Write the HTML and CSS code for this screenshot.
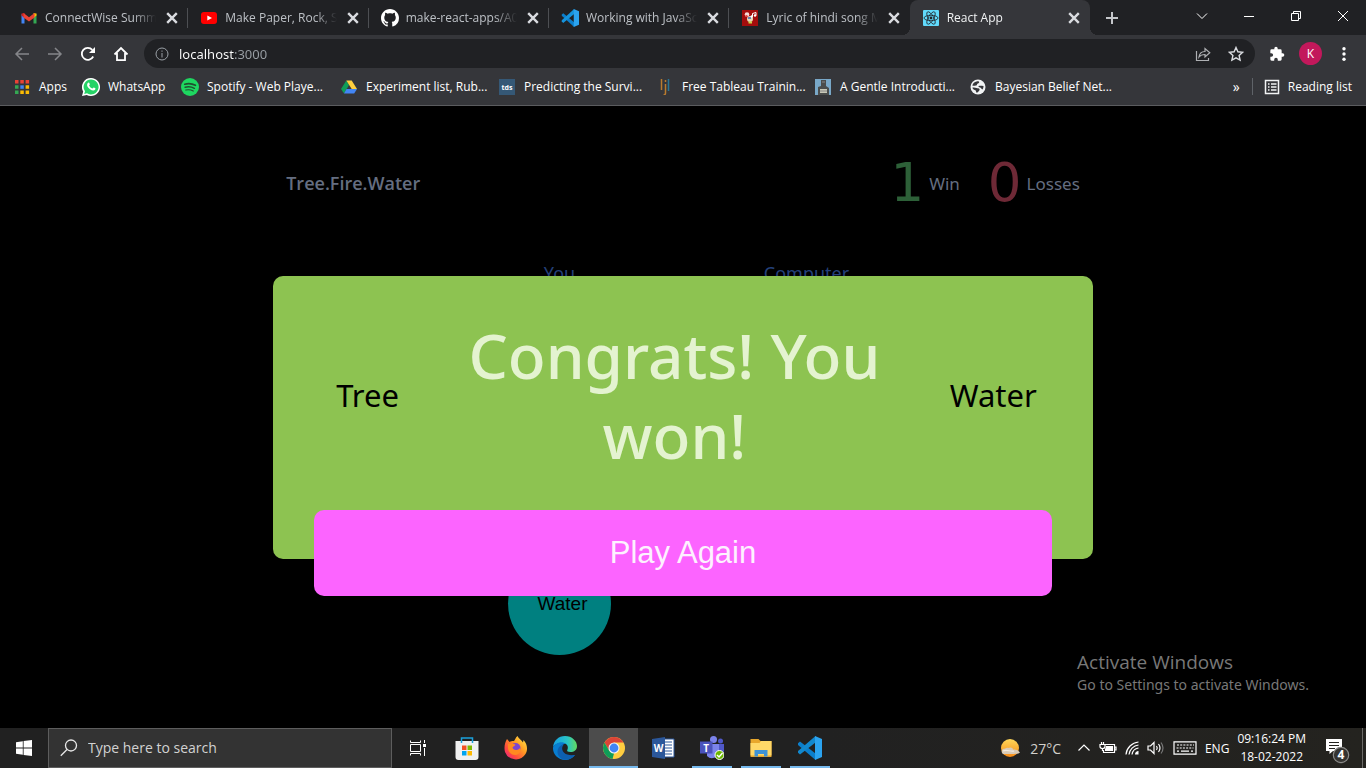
FILE: index.html
```html
<!DOCTYPE html>
<html lang="en">
<head>
<meta charset="utf-8">
<meta name="viewport" content="width=device-width, initial-scale=1">
<title>React App</title>
<link rel="stylesheet" href="styles.css">
</head>
<body>
<header class="browser">
  <div class="strip">
    <nav class="tabs" aria-label="Tabs">
      <div class="tab">
        <svg class="ico" viewBox="0 0 16 16"><path d="M.5 4v9.500h3V7z" fill="#4285f4"/><path d="M12.500 7v6.500h3V4z" fill="#34a853"/><path d="M.5 3.500 3.500 3v5L.5 5.500z" fill="#c5221f"/><path d="M15.500 3.500 12.500 3v5l3-2.500z" fill="#fbbc04"/><path d="M2.500 3 8 7.200 13.500 3v4.500L8 11.500 2.500 7.500z" fill="#ea4335"/></svg>
        <a class="tab-title" href="#">ConnectWise Summe</a>
        <button class="close" aria-label="Close tab"><svg viewBox="0 0 10 10"><path d="M1 1l8 8M9 1L1 9"/></svg></button>
      </div>
      <div class="tab">
        <svg class="ico" viewBox="0 0 16 16"><rect y="2" width="16" height="12" rx="3" fill="#f00"/><path d="M6.300 5.500v5L11 8z" fill="#fff"/></svg>
        <a class="tab-title" href="#">Make Paper, Rock, Sc</a>
        <button class="close" aria-label="Close tab"><svg viewBox="0 0 10 10"><path d="M1 1l8 8M9 1L1 9"/></svg></button>
      </div>
      <div class="tab">
        <svg class="ico big" viewBox="0 0 16 16"><path fill="#fff" d="M8 0C3.580 0 0 3.580 0 8c0 3.540 2.290 6.530 5.470 7.590.4.070.55-.17.55-.38 0-.19-.01-.82-.01-1.490-2.010.37-2.530-.49-2.690-.94-.09-.23-.48-.94-.82-1.130-.28-.15-.68-.52-.01-.53.63-.01 1.080.58 1.230.82.72 1.210 1.870.87 2.330.66.07-.52.28-.87.51-1.070-1.780-.2-3.640-.89-3.640-3.950 0-.87.31-1.590.82-2.150-.08-.2-.36-1.020.08-2.120 0 0 .67-.21 2.200.82.640-.18 1.320-.27 2-.27s1.360.09 2 .27c1.530-1.040 2.200-.82 2.200-.82.440 1.100.160 1.920.080 2.120.51.56.82 1.270.82 2.150 0 3.070-1.870 3.750-3.650 3.950.29.25.54.73.54 1.480 0 1.070-.01 1.930-.01 2.200 0 .21.15.46.55.38A8 8 0 0 0 16 8c0-4.420-3.580-8-8-8z"/></svg>
        <a class="tab-title" href="#">make-react-apps/A04</a>
        <button class="close" aria-label="Close tab"><svg viewBox="0 0 10 10"><path d="M1 1l8 8M9 1L1 9"/></svg></button>
      </div>
      <div class="tab">
        <svg class="ico big" viewBox="0 0 24 24"><path d="M1 7.200 3 5.500l14.500 12V24L1 9z" fill="#0b7ecb"/><path d="M1 16.800 3 18.500 17.500 6.500V0L1 15z" fill="#1593dc"/><path d="M17 0l7 3v18l-7 3z" fill="#2ba3ef"/></svg>
        <a class="tab-title" href="#">Working with JavaScr</a>
        <button class="close" aria-label="Close tab"><svg viewBox="0 0 10 10"><path d="M1 1l8 8M9 1L1 9"/></svg></button>
      </div>
      <div class="tab">
        <svg class="ico" viewBox="0 0 16 16"><path d="M0 0h16v16H0z" fill="#a30d0d"/><circle cx="5" cy="4.500" r="2.300" fill="#f6dcd8"/><path d="M3.500 5.500l3 1.500" stroke="#e04040" stroke-width="1.500"/><circle cx="8" cy="9" r="3" fill="#e8d9b8"/><path d="M6 8h3" stroke="#3a62b5" stroke-width="1.500"/><path d="M6.500 11.500h3.500v2H6.500z" fill="#c8d84a"/><path d="M10.500 6.500V3.500l3.500-1v3" stroke="#fff" fill="none"/><circle cx="9.800" cy="6.500" r="1.200" fill="#fff"/><circle cx="13" cy="5.500" r="1.200" fill="#fff"/></svg>
        <a class="tab-title" href="#">Lyric of hindi song M</a>
        <button class="close" aria-label="Close tab"><svg viewBox="0 0 10 10"><path d="M1 1l8 8M9 1L1 9"/></svg></button>
      </div>
      <div class="tab active">
        <svg class="ico" viewBox="0 0 16 16"><rect width="16" height="16" rx="1" fill="#61dafb"/><g fill="none" stroke="#20232a" stroke-width=".8"><ellipse cx="8" cy="8" rx="7" ry="2.700"/><ellipse cx="8" cy="8" rx="7" ry="2.700" transform="rotate(60 8 8)"/><ellipse cx="8" cy="8" rx="7" ry="2.700" transform="rotate(120 8 8)"/></g><circle cx="8" cy="8" r="1.400" fill="#20232a"/></svg>
        <a class="tab-title" href="#">React App</a>
        <button class="close" aria-label="Close tab"><svg viewBox="0 0 10 10"><path d="M1 1l8 8M9 1L1 9"/></svg></button>
      </div>
    </nav>
    <button class="new-tab" aria-label="New tab"><svg viewBox="0 0 12 12"><path d="M6 0v12M0 6h12"/></svg></button>
    <div class="window-controls">
      <button aria-label="Search tabs"><svg viewBox="0 0 12 12"><path d="M1 3.500l5 5 5-5"/></svg></button>
      <button aria-label="Minimize"><svg viewBox="0 0 12 12"><path d="M1 6.500h10"/></svg></button>
      <button aria-label="Restore"><svg viewBox="0 0 12 12"><path d="M1.500 3.500h7v7h-7zM3.500 3.500v-2h7v7h-2"/></svg></button>
      <button aria-label="Close window"><svg viewBox="0 0 12 12"><path d="M1 1l10 10M11 1L1 11"/></svg></button>
    </div>
  </div>

  <div class="toolbar">
    <div class="nav-buttons">
      <button class="dim" aria-label="Back"><svg viewBox="0 0 16 16"><path d="M15 8H2M8 2L2 8l6 6"/></svg></button>
      <button class="dim" aria-label="Forward"><svg viewBox="0 0 16 16"><path d="M1 8h13M8 2l6 6-6 6"/></svg></button>
      <button aria-label="Reload"><svg viewBox="0 0 16 16"><path d="M13.200 10.500A6 6 0 1 1 12.300 3.800" stroke-width="1.800"/><path d="M15 1v6H9z" fill="currentColor" stroke="none"/></svg></button>
      <button aria-label="Home"><svg viewBox="0 0 16 16"><path d="M1.500 8.500 8 2l6.500 6.500M4 7v7.200h8V7" stroke-width="1.800"/></svg></button>
    </div>
    <div class="omnibox">
      <svg class="info" viewBox="0 0 14 14"><circle cx="7" cy="7" r="6"/><path d="M7 6v4.500M7 3.500v1.300"/></svg>
      <input class="url" type="text" value="localhost:3000" aria-label="Address">
      <button aria-label="Share"><svg viewBox="0 0 16 16"><path d="M1.500 5v9.500h12V12M4 11c.5-4 3-5.500 6-5.500V2.500l4.800 4.300L10 11V8.500c-3 0-4.500.5-6 2.500z" stroke-width="1.200"/></svg></button>
      <button class="star" aria-label="Bookmark this page"><svg viewBox="0 0 16 16"><path d="M8 1.500l1.900 4.300 4.700.5-3.500 3.200 1 4.700L8 11.800l-4.100 2.400 1-4.700L1.400 6.300l4.700-.5z" stroke-width="1.400"/></svg></button>
    </div>
    <div class="actions">
      <button aria-label="Extensions"><svg viewBox="0 0 24 24"><path fill="currentColor" stroke="none" d="M20.500 11H19V7a2 2 0 0 0-2-2h-4V3.500a2.500 2.500 0 0 0-5 0V5H4a2 2 0 0 0-2 2v3.800h1.500a2.700 2.700 0 0 1 0 5.400H2V20a2 2 0 0 0 2 2h3.800v-1.500a2.700 2.700 0 0 1 5.400 0V22H17a2 2 0 0 0 2-2v-4h1.500a2.500 2.500 0 0 0 0-5z"/></svg></button>
      <button class="avatar" aria-label="Profile">K</button>
      <button aria-label="Menu"><svg viewBox="0 0 16 16"><g fill="currentColor" stroke="none"><circle cx="8" cy="2.800" r="1.700"/><circle cx="8" cy="8" r="1.700"/><circle cx="8" cy="13.200" r="1.700"/></g></svg></button>
    </div>
  </div>

  <nav class="bookmarks" aria-label="Bookmarks">
    <a class="bookmark" href="#"><svg class="ico" viewBox="0 0 16 16"><path fill="#ea4335" d="M1 1h3.500v3.500H1zM6.300 1h3.500v3.500H6.300zM11.600 1h3.500v3.500h-3.500z"/><path fill="#34a853" d="M1 6.300h3.500v3.500H1zM1 11.600h3.500v3.500H1z"/><path fill="#4285f4" d="M6.300 6.300h3.500v3.500H6.300z"/><path fill="#fbbc04" d="M11.600 6.300h3.500v3.500h-3.500zM6.300 11.600h3.500v3.500H6.300zM11.600 11.600h3.500v3.500h-3.500z"/></svg>Apps</a>
    <a class="bookmark" href="#"><svg class="ico big" viewBox="0 0 18 18"><path d="M9 0a9 9 0 1 1-4.300 16.900L0 18l1.200-4.500A9 9 0 0 1 9 0z" fill="#fff"/><path d="M9 1.500a7.500 7.500 0 1 1-4 13.800l-2.800.7.800-2.700A7.500 7.500 0 0 1 9 1.500z" fill="#25d366"/><path d="M5.800 5c.8-.9 1.400-.6 1.900.9.300.9-.4 1-.6 1.600.8 1.600 1.800 2.500 3.300 3.100.6-.3.900-1.300 1.500-1 1.800.8 1.900 1 1.300 1.900-1 1.500-3.300 1-5.200-.3C5.500 9.500 4.300 7 5.800 5z" fill="#fff"/></svg>WhatsApp</a>
    <a class="bookmark" href="#"><svg class="ico big" viewBox="0 0 16 16"><circle cx="8" cy="8" r="8" fill="#1ed760"/><g fill="none" stroke="#20502f" stroke-linecap="round"><path d="M3.300 5.500c3-.9 6.600-.6 9.500 1" stroke-width="1.500"/><path d="M3.700 8.200c2.700-.7 5.700-.4 8.200 1" stroke-width="1.300"/><path d="M4.200 10.700c2.300-.5 4.700-.3 6.700.9"/></g></svg>Spotify - Web Playe...</a>
    <a class="bookmark" href="#"><svg class="ico" viewBox="0 0 16 16"><path d="M5.300 1.500 8 6 3 14.500 0 10z" fill="#0f9d58"/><path d="M5.300 1.500h5.400L16 10h-5.300z" fill="#ffcf3e"/><path d="M5.500 10H16l-2.800 4.500H3z" fill="#4285f4"/></svg>Experiment list, Rub...</a>
    <a class="bookmark" href="#"><svg class="ico" viewBox="0 0 16 16"><path fill="#355876" d="M0 0h16v16H0z"/><text class="tds" x="8" y="11" text-anchor="middle">tds</text></svg>Predicting the Survi...</a>
    <a class="bookmark" href="#"><svg class="ico" viewBox="0 0 16 16"><path d="M4.500 0v11M8.500 5v9q0 2-2 2" stroke="#b97b2f" stroke-width="1.500" fill="none"/><path d="M11.500 0v12" stroke="#287695" stroke-width="1.500"/><path d="M8.500 1v2" stroke="#b97b2f" stroke-width="1.500"/></svg>Free Tableau Trainin...</a>
    <a class="bookmark" href="#"><svg class="ico" viewBox="0 0 16 16"><path fill="#79a8c8" d="M0 0h16v16H0z"/><path fill="#4b4d4c" d="M6 1h5v6H6zM3 8l3-1h5l3 2v7H3z"/><path fill="#c9c9b8" d="M5 10h7v4H5z"/><path d="M5 12h7M7 3h3" stroke="#888"/></svg>A Gentle Introducti...</a>
    <a class="bookmark" href="#"><svg class="ico" viewBox="0 0 16 16"><circle cx="8" cy="8" r="7.500" fill="#f1f3f4"/><path d="M2.300 6.500C3 4 5 2.500 7.500 2.300c1.500 0 2 .7 1.500 1.500S7 4.500 7 5.500s-1 1-2 1.200-1.700.3-2.700-.2z" fill="#35363a"/><path d="M2.500 8.500c1.500-.3 3 0 4 .5s2.500 0 3 1-.5 2-1.500 3-2 .8-2-.5-1-1.500-2-1.800-1.500-1.200-1.500-2.200zM8.500 7c1.500-.5 3-.3 5 0 0 1.500-.3 2.500-1 3.500-1-.5-1.500-1.800-2.500-2S8.500 8 8.500 7z" fill="#35363a"/></svg>Bayesian Belief Net...</a>
    <button class="more" aria-label="More bookmarks">»</button>
    <button class="reading"><svg class="ico" viewBox="0 0 16 16"><path d="M1.500 1.500h13v13h-13z" stroke="#f1f3f4" stroke-width="1.500" fill="none"/><path d="M4 5h1.500M7 5h5.500M4 8h1.500M7 8h5.500M4 11h1.500M7 11h5.500" stroke="#f1f3f4" stroke-width="1.500"/></svg>Reading list</button>
  </nav>
</header>

<main class="stage">
  <div class="game">
    <div class="scorebar">
      <h1 class="brand">Tree.Fire.Water</h1>
      <div class="scores">
        <div class="score win"><span class="digit">1</span>Win</div>
        <div class="score loss"><span class="digit">0</span>Losses</div>
      </div>
    </div>
    <div class="board">
      <section class="player"><h2>You</h2><button class="choice">Water</button></section>
      <section class="player"><h2>Computer</h2></section>
    </div>
  </div>

  <section class="result" role="dialog" aria-label="Round result">
    <div class="result-row">
      <span class="pick">Tree</span>
      <p class="message">Congrats! You won!</p>
      <span class="pick">Water</span>
    </div>
    <button class="play">Play Again</button>
  </section>

  <aside class="watermark"><strong>Activate Windows</strong><span>Go to Settings to activate Windows.</span></aside>
</main>

<footer class="taskbar">
  <button class="start" aria-label="Start"><svg viewBox="0 0 16 16"><path fill="#fff" d="M0 2.200 6.800 1.200v6.400H0zM7.600 1.100 16 0v7.600H7.600zM0 8.400h6.800v6.400L0 13.800zM7.600 8.400H16V16l-8.400-1.100z"/></svg></button>
  <label class="search"><svg viewBox="0 0 18 18"><circle cx="11" cy="6.500" r="5.500"/><path d="M7 10.500.8 16.800"/></svg><input type="search" placeholder="Type here to search" aria-label="Type here to search"></label>
  <div class="apps">
    <button class="app" aria-label="Task view"><svg class="small" viewBox="0 0 16 16"><path d="M.5 4.500h10v7H.5zM.5 .5v2h10v-2M.5 15.500v-2h10v2M14.500 0v3M14.500 8v8" fill="none" stroke="#fff"/><path d="M13 4h3v3h-3z" fill="#fff"/></svg></button>
    <button class="app" aria-label="Microsoft Store"><svg viewBox="0 0 24 24"><path d="M.5 5h23v16a3 3 0 0 1-3 3h-17a3 3 0 0 1-3-3z" fill="#f0f0f0"/><path d="M6.500 7V2h11v5" fill="none" stroke="#1ba1dc" stroke-width="1.500"/><path d="M7 9.500h4.500V14H7z" fill="#f25022"/><path d="M12.500 9.500H17V14h-4.500z" fill="#7fba00"/><path d="M7 15h4.500v4.500H7z" fill="#00a4ef"/><path d="M12.500 15H17v4.500h-4.500z" fill="#ffb900"/></svg></button>
    <button class="app" aria-label="Firefox"><svg viewBox="0 0 24 24"><defs><linearGradient id="fx" x1="1" y1="0" x2="0" y2="1"><stop offset="0" stop-color="#fff44f"/><stop offset=".4" stop-color="#ff9a22"/><stop offset=".7" stop-color="#ff4d3d"/><stop offset="1" stop-color="#e5178f"/></linearGradient></defs><path d="M3 3l2.500 3C7 4.800 9 5 10 5c1-1 1.500-3.500 3.500-5 1 3 4 3.500 5.500 6.500l.5-2.500c4 4 4.500 10 2 14A11.500 11.500 0 0 1 1 16C-.2 11.500.8 6.500 3 3z" fill="url(#fx)"/><circle cx="11.500" cy="12" r="5" fill="#7d45d1"/><path d="M4 8c3-.5 6-.5 7.500.8C11 10 9 10.500 8.500 11.500c.5 3 5 3.500 7.500.5 1.500 3-1 7-4.500 7C7 19 4 15.500 4 12z" fill="#ff8a20"/></svg></button>
    <button class="app" aria-label="Microsoft Edge"><svg viewBox="0 0 24 24"><defs><linearGradient id="eg"><stop offset="0" stop-color="#169fe2"/><stop offset=".6" stop-color="#29c4c6"/><stop offset="1" stop-color="#62db5e"/></linearGradient></defs><path d="M0 11.500C.5 4.500 5.500 0 12 0c7 0 12 5 12 10 0 4-3 6-6.500 6-2.500 0-4-.8-3.200-2C16.500 9 12 6.500 8.500 7 4.500 7.200 1 9 0 11.500z" fill="url(#eg)"/><path d="M0 11.500C2 7 9 4.500 13 8c-4-.5-6 3-5.500 6.500.7 4.500 6 7.500 14.500 4.500-3.500 5-9.500 6-14 4.200C3 21.500-.3 17 0 11.500z" fill="#087dd0"/><path d="M11 8.500C7.500 11 8 20.500 22 19c-2.500 3.500-7 5.300-11 4.700C5.500 22 3.500 17 5 13c1-2.500 3-4 6-4.500z" fill="#0d5fb0"/></svg></button>
    <button class="app current" aria-label="Google Chrome"><svg viewBox="0 0 24 24"><circle cx="12" cy="12" r="11" fill="#ffcd40"/><path d="M2.500 6.500A11 11 0 0 1 21.500 6.500H12L7.200 14.700z" fill="#db4437"/><path d="M2.500 6.500 7.200 14.700 12 17.500l-1.500 5.400A11 11 0 0 1 2.500 6.500z" fill="#0f9d58"/><circle cx="12" cy="12" r="5.500" fill="#f1f1f1"/><circle cx="12" cy="12" r="4.400" fill="#4285f4"/></svg></button>
    <button class="app" aria-label="Word"><svg viewBox="0 0 24 24"><path d="M12 3h11v18H12z" fill="#fff" stroke="#2b579a"/><path d="M14 6h7M14 9h7M14 12h7M14 15h7M14 18h7" stroke="#2b579a"/><path d="M1 3 14 1v22L1 21z" fill="#2b579a"/><text class="word" x="7.500" y="16" text-anchor="middle">W</text></svg></button>
    <button class="app open" aria-label="Teams"><svg viewBox="0 0 24 24"><circle cx="20.500" cy="5" r="2.500" fill="#5059c9"/><path d="M15 8h9v7a5 5 0 0 1-9 2z" fill="#5059c9"/><circle cx="13.500" cy="3.500" r="3.500" fill="#7b83eb"/><path d="M7 8h12v8a7 7 0 0 1-12 4z" fill="#7b83eb"/><path d="M0 5.500h12.500v12H0z" fill="#4b53bc"/><text class="word" x="6.200" y="15.500" text-anchor="middle">T</text><circle cx="19.500" cy="19" r="4.500" fill="#6bb700" stroke="#fff"/><path d="M17 19l2 2 3.500-4" fill="none" stroke="#fff" stroke-width="1.500"/></svg></button>
    <button class="app open" aria-label="File Explorer"><svg viewBox="0 0 24 24"><path d="M1.500 3h8l2 2h11v16h-21z" fill="#e8a72c"/><path d="M1.500 7h9l1.500-2h10.500v14.500h-21z" fill="#ffd868"/><path d="M5.500 20.500V14h13v6.500H15V18H9v2.500z" fill="#3f93d5"/></svg></button>
    <button class="app open" aria-label="Visual Studio Code"><svg viewBox="0 0 24 24"><path d="M0 7.200 2 5.500l15.500 12V24L0 9z" fill="#0b7ecb"/><path d="M0 16.800 2 18.500 17.500 6.500V0L0 15z" fill="#1288ce"/><path d="M17 0l7 3v18l-7 3z" fill="#2ba3ef"/></svg></button>
  </div>
  <div class="tray">
    <button class="weather"><svg viewBox="0 0 20 20"><defs><linearGradient id="sun" x2="0" y2="1"><stop stop-color="#ffd75a"/><stop offset="1" stop-color="#f58a16"/></linearGradient></defs><circle cx="10" cy="10" r="9" fill="url(#sun)"/><path d="M3 16a3 3 0 0 1 0-5c2 0 3-2 6-1 2-1 4 0 4 1.500 3 0 5 .5 7 3-2 2-6 1.500-17 1.500z" fill="#d9cbb7"/><path d="M3 13c4-2 7 1 11 0" stroke="#f4ece1" fill="none"/></svg>27°C</button>
    <button aria-label="Show hidden icons"><svg viewBox="0 0 14 14"><path d="M1.500 9.500 7 4l5.500 5.500"/></svg></button>
    <button aria-label="Battery"><svg viewBox="0 0 18 14"><path d="M6 3.500h9.500v8H4.500V9M15.500 6H17v3h-1.500M1 3.500h5v2q0 2-2.500 2T1 5.500zM2.500 1v2.500M4.500 1v2.500M3.500 7.500V10"/><path d="M7 5h7v5H6V8l1-2z" fill="#fff" stroke="none"/></svg></button>
    <button aria-label="Network"><svg viewBox="0 0 14 14"><path d="M1 13.500C1.500 7 7 1.500 13.500 1M4 13.500C4.500 8.500 8.500 4.500 13.500 4M7 13.500c.5-3.500 3-6 6.500-6.500"/><path d="M10 13.500c0-2 1.500-3.500 3.500-3.500v3.500z" fill="#fff" stroke="none"/></svg></button>
    <button aria-label="Volume"><svg viewBox="0 0 18 14"><path d="M1 5h2.500L7 1.500v11L3.500 9H1zM9.500 5q1.500 2 0 4M11.500 3q3 4 0 8"/><path d="M14 1.500q4 5.500 0 11" stroke="#777"/></svg></button>
    <button aria-label="Touch keyboard"><svg viewBox="0 0 24 14"><path d="M1 .8h22v12.400H1z"/><path d="M4 4h17M3.500 7h17" stroke-dasharray="2 1.200"/><path d="M4 10.200h2M8 10.200h8M18 10.200h2"/></svg></button>
    <button class="language">ENG</button>
    <button class="clock"><time>09:16:24 PM</time><time>18-02-2022</time></button>
    <button class="notes" aria-label="Notifications"><svg viewBox="0 0 26 26"><path d="M2 1h16v12H9l-3.500 3v-3H2z" fill="#fff"/><path d="M5 4.500h10M5 7.500h10M5 10.500h6" stroke="#24231f" stroke-width="1.200"/><circle cx="17" cy="17" r="7.700" fill="#353431" stroke="#8b8b89"/><text class="count" x="17" y="21" text-anchor="middle">4</text></svg></button>
  </div>
</footer>
</body>
</html>
```
FILE: styles.css
```css
* { box-sizing: border-box; }

body {
  margin: 0;
  min-height: 100vh;
  display: flex;
  flex-direction: column;
  background: #000;
  font-family: "Open Sans", "Noto Sans", sans-serif;
  font-size: 12px;
  color: #fff;
  overflow: hidden;
}

button {
  margin: 0;
  padding: 0;
  border: 0;
  background: none;
  color: inherit;
  font: inherit;
}

a { color: inherit; text-decoration: none; }
svg { display: block; flex: none; }

.ico { width: 16px; height: 16px; }
.ico.big { width: 18px; height: 18px; margin: 0 -1px; }

/* Browser window */
.browser { background: #35363a; border-bottom: 1px solid #5b5c5f; }

.strip {
  display: flex;
  height: 35px;
  background: #202124;
}

.tabs { display: flex; flex: 0 1 1090px; min-width: 0; padding-left: 8px; }

.tab {
  position: relative;
  flex: 1 1 0;
  min-width: 0;
  display: flex;
  align-items: center;
  gap: 8px;
  padding: 0 8px 0 13px;
  color: #bdc1c6;
}

.tab:not(.active):not(:nth-child(5))::after {
  content: "";
  position: absolute;
  right: 0;
  top: 8px;
  width: 1px;
  height: 20px;
  background: #4d4f53;
}

.tab-title {
  flex: 1;
  min-width: 0;
  white-space: nowrap;
  mask-image: linear-gradient(90deg, #000 80%, transparent);
}

.close svg { width: 12px; height: 12px; stroke: #dadce0; stroke-width: 2; }
.close { padding: 2px; }

.tab.active { background: #35363a; color: #f1f3f4; border-radius: 8px 8px 0 0; }

.tab.active::before,
.tab.active::after {
  content: "";
  position: absolute;
  bottom: 0;
  width: 8px;
  height: 8px;
}
.tab.active::before { right: 100%; background: radial-gradient(circle at 0 0, transparent 8px, #35363a 8px); }
.tab.active::after { left: 100%; background: radial-gradient(circle at 100% 0, transparent 8px, #35363a 8px); }

.new-tab { padding: 0 16px; }
.new-tab svg { width: 12px; height: 12px; stroke: #c4c7ca; stroke-width: 2; }

.window-controls { display: flex; margin-left: auto; padding-bottom: 4px; }
.window-controls button { width: 47px; display: grid; place-items: center; }
.window-controls svg { width: 12px; height: 12px; fill: none; stroke: #fff; }

.toolbar { display: flex; align-items: center; padding: 4px 14px 0; }
.toolbar svg { width: 16px; height: 16px; fill: none; stroke: currentColor; stroke-width: 1.5; }
.nav-buttons { display: flex; gap: 17px; margin-right: 15px; }
.dim { color: #85868a; }

.omnibox {
  flex: 1;
  display: flex;
  align-items: center;
  gap: 17px;
  height: 29px;
  padding: 0 11px;
  border-radius: 15px;
  background: #202124;
  color: #aeb0b3;
}
.omnibox .info { width: 14px; height: 14px; margin-right: -7px; color: #9aa0a6; stroke-width: 1; }
.omnibox .star { color: #dadce0; }

.url {
  flex: 1;
  min-width: 0;
  padding: 0;
  border: 0;
  outline: 0;
  background: linear-gradient(90deg, #fff 55px, #9aa0a6 55px);
  background-clip: text;
  color: transparent;
  font: 13px/20px "Noto Sans", sans-serif;
}

.actions { display: flex; align-items: center; gap: 14px; margin-left: 14px; }
.avatar { width: 23px; height: 23px; border-radius: 50%; background: #c2185b; }

.bookmarks {
  display: grid;
  grid-template-columns: 69px 99px 159px 158px 158px 158px 155px 1fr auto auto;
  align-items: center;
  height: 37px;
  padding: 0 14px;
}
.bookmark { display: flex; align-items: center; gap: 9px; white-space: nowrap; }
.tds { font: bold 7px "Open Sans", sans-serif; fill: #fff; }
.more { padding: 0 12px; font-size: 14px; line-height: 18px; }
.reading {
  display: flex;
  align-items: center;
  gap: 8px;
  padding-left: 11px;
  border-left: 1px solid #5f6368;
}

/* Page */
.stage {
  position: relative;
  flex: 1;
  background: #000;
  font-family: "Noto Sans", sans-serif;
}

.game { width: 60%; margin: 0 auto; padding: 46px 13px 0; }
.scorebar { display: flex; align-items: center; justify-content: space-between; height: 62px; }
.brand { margin: 0; font: 600 18px "Open Sans", sans-serif; color: #656e81; }
.scores { display: flex; gap: 28px; }
.score { display: flex; align-items: center; gap: 5px; font-size: 17px; color: #656e81; }
.digit { font-family: "DejaVu Sans", sans-serif; font-size: 53px; line-height: 62px; }
.win .digit { color: #2d6038; }
.loss .digit { color: #6e2936; }

.board { display: grid; grid-template-columns: 247px 247px; justify-content: center; margin-top: 46px; }
.player { display: flex; flex-direction: column; align-items: center; }
.player h2 { margin: 0; font-size: 18px; line-height: 26px; font-weight: 400; color: #24407b; }
.choice {
  width: 103px;
  height: 103px;
  margin-top: 266px;
  padding-left: 6px;
  border-radius: 50%;
  background: #008080;
  color: #000;
  font: 19px "Liberation Sans", sans-serif;
}

/* Result dialog */
.result {
  position: absolute;
  top: 170px;
  left: 20%;
  right: 20%;
  border-radius: 10px;
  background: #8dc351;
}
.result-row {
  display: flex;
  align-items: center;
  justify-content: space-between;
  padding: 39px 56px 35px 63px;
  color: #000;
}
.pick { font-size: 31px; }
.message {
  margin: 0;
  max-width: 430px;
  font-size: 62px;
  font-weight: 500;
  line-height: 80px;
  text-align: center;
  color: #e4f3d0;
}
.play {
  display: block;
  width: 90%;
  height: 86px;
  margin: 0 auto -37px;
  border-radius: 10px;
  background: #fc64ff;
  color: #fdf1fe;
  font: 31px "Liberation Sans", sans-serif;
}

.watermark {
  position: absolute;
  right: 57px;
  bottom: 33px;
  display: flex;
  flex-direction: column;
  font-size: 14px;
  line-height: 20px;
  color: #787878;
}
.watermark strong { font: 400 19px/26px "Open Sans", sans-serif; }

/* Taskbar */
.taskbar { display: flex; height: 40px; background: linear-gradient(90deg, #212121 60%, #24231f); }
.start { width: 48px; display: grid; place-items: center; }
.start svg { width: 16px; height: 16px; }

.search {
  flex: 0 1 344px;
  display: flex;
  align-items: center;
  gap: 10px;
  padding: 0 11px;
  border: 1px solid #5d5d5d;
  background: #333;
}
.search svg { width: 18px; height: 18px; fill: none; stroke: #e8e8e8; stroke-width: 1.3; }
.search input {
  flex: 1;
  min-width: 0;
  padding: 0;
  border: 0;
  outline: 0;
  background: none;
  font: 14px/20px "Open Sans", sans-serif;
}
.search input::placeholder { color: #d2d2d2; opacity: 1; }

.apps { display: flex; padding-left: 1px; }
.app { width: 49px; display: grid; place-items: center; border-bottom: 2px solid transparent; border-top: 2px solid transparent; }
.app svg { width: 24px; height: 24px; }
.app svg.small { width: 16px; height: 16px; }
.app.current { background: #4c4c4c; border-color: #4c4c4c #4c4c4c #76b9ed; }
.app.open { background: linear-gradient(#76b9ed, #76b9ed) center bottom / 40px 2px no-repeat border-box; }
.word { font: bold 10px "Open Sans", sans-serif; fill: #fff; }

.tray { display: flex; align-items: center; margin-left: auto; padding-right: 3px; }
.tray > button { margin-right: 8px; }
.tray svg { height: 14px; fill: none; stroke: #fff; stroke-width: 1.2; }
.weather { display: flex; align-items: center; gap: 10px; font-size: 14px; color: #d2d0cb; }
.tray .weather svg { height: 20px; stroke: none; }
.tray .weather { margin-right: 16px; }
.clock { display: flex; flex-direction: column; align-items: center; line-height: 18px; }
.tray .clock { margin-right: 18px; }
.tray .notes svg { height: 26px; stroke: none; }
.tray .notes { align-self: stretch; margin: 0; padding: 5px 12px 0 0; border-right: 1px solid #6b6a67; }
.count { font: bold 12px "Open Sans", sans-serif; fill: #fff; }
```
